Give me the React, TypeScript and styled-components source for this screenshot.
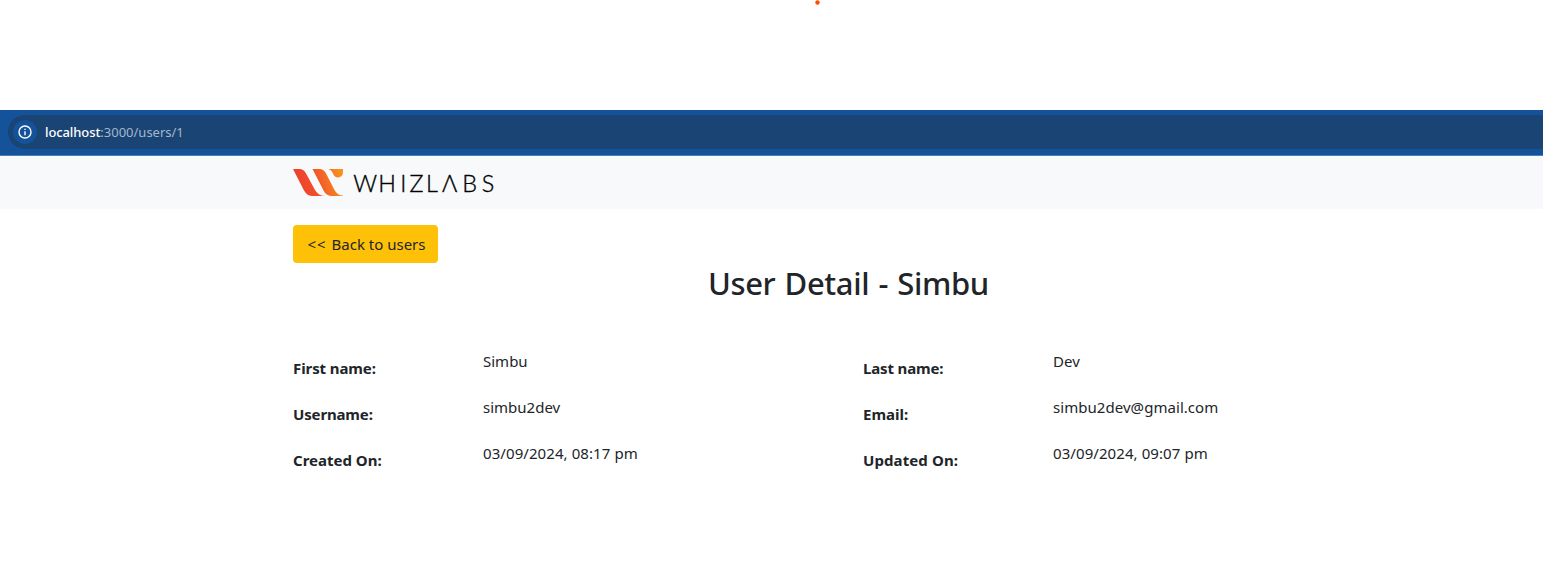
import React from "react";
import styled, { createGlobalStyle } from "styled-components";

const GlobalStyle = createGlobalStyle`
  * { box-sizing: border-box; }
  body {
    margin: 0;
    background: #fff;
    color: #212529;
    font-family: "Noto Sans", "Open Sans", sans-serif;
    font-size: 15px;
    line-height: 24px;
  }
`;

const Top = styled.div`
  height: 110px;
  padding-left: 815px;
`;

const Dot = styled.svg`
  display: block;
`;

const BrowserBar = styled.div`
  height: 46px;
  padding: 5px 0 6px 8px;
  background: #14539a;
  border-bottom: 1px solid #4a7fb8;
`;

const AddressField = styled.div`
  display: flex;
  align-items: center;
  height: 34px;
  padding-left: 5px;
  border-radius: 17px 0 0 17px;
  background: #194473;
`;

const InfoBadge = styled.span`
  display: flex;
  align-items: center;
  justify-content: center;
  width: 24px;
  height: 24px;
  border-radius: 50%;
  background: #14539a;
`;

const Address = styled.span`
  margin-left: 8px;
  color: #a3b8cf;
  font-size: 13px;
  line-height: 20px;
`;

const Host = styled.span`
  color: #fff;
  font-weight: 500;
  letter-spacing: -0.1px;
`;

const Header = styled.header`
  height: 53px;
  padding: 10px 0 0 293px;
  background: #f8f9fb;
`;

const Logo = styled.svg`
  display: block;
`;

const Wordmark = styled.text`
  font-family: Lato, sans-serif;
  font-size: 23.4px;
  font-weight: 300;
  fill: #000;
  stroke: #000;
  stroke-width: 0.35px;
`;

const Main = styled.main`
  width: 1140px;
  margin-left: 293px;
  padding-top: 16px;
`;

const BackButton = styled.button`
  display: block;
  width: 145px;
  height: 38px;
  padding: 0 0 0 2px;
  border: 0;
  border-radius: 4px;
  background: #ffc107;
  color: #212529;
  font: inherit;
  white-space: nowrap;
`;

const Arrows = styled.span`
  margin-right: 1px;
  letter-spacing: 1px;
`;

const Title = styled.h2`
  height: 38px;
  margin: 1px 0 0 415px;
  font-size: 31px;
  font-weight: 500;
  line-height: 38px;
  letter-spacing: -0.38px;
  word-spacing: 1.6px;
`;

const Details = styled.dl`
  display: grid;
  grid-template-columns: repeat(2, 190px 380px);
  grid-auto-rows: 46px;
  margin: 46px 0 0;
`;

const Label = styled.dt<{ $spacing: number }>`
  padding-top: 8px;
  font-weight: 700;
  letter-spacing: ${(p) => p.$spacing}px;
`;

const Value = styled.dd<{ $spacing: number }>`
  margin: 0;
  padding-top: 1px;
  letter-spacing: ${(p) => p.$spacing}px;
`;

const fields = [
  { label: "First name:", value: "Simbu", ls: -0.1, vs: 0 },
  { label: "Last name:", value: "Dev", ls: -0.15, vs: 0.1 },
  { label: "Username:", value: "simbu2dev", ls: -0.15, vs: 0 },
  { label: "Email:", value: "simbu2dev@gmail.com", ls: 0, vs: 0.05 },
  { label: "Created On:", value: "03/09/2024, 08:17 pm", ls: 0, vs: 0.08 },
  { label: "Updated On:", value: "03/09/2024, 09:07 pm", ls: 0.1, vs: 0.08 },
];

export default function App() {
  return (
    <>
      <GlobalStyle />
      <Top>
        <Dot width="5" height="5" viewBox="0 0 5 5">
          <circle cx="2.5" cy="2.5" r="2.2" fill="#ff4d00" />
        </Dot>
      </Top>
      <BrowserBar>
        <AddressField>
          <InfoBadge>
            <svg width="14" height="14" viewBox="0 0 14 14" fill="none" stroke="#fff">
              <circle cx="7" cy="7" r="6" strokeWidth="1.4" />
              <path d="M7 6.2v4M7 3.8v1.3" strokeWidth="1.4" />
            </svg>
          </InfoBadge>
          <Address>
            <Host>localhost</Host>:3000/users/1
          </Address>
        </AddressField>
      </BrowserBar>
      <Header>
        <Logo width="206" height="34" viewBox="0 -3 206 34" aria-label="Whizlabs">
          <defs>
            <linearGradient id="mark" gradientUnits="userSpaceOnUse" x1="0" y1="15" x2="50" y2="4">
              <stop offset="0" stopColor="#ee3d2f" />
              <stop offset="0.4" stopColor="#f04e2b" />
              <stop offset="1" stopColor="#f9951d" />
            </linearGradient>
          </defs>
          <g fill="url(#mark)">
            <path d="M0 0H6.500Q10.500 0 12.800 4L22 21Q25.200 26.500 31.500 27H20Q14 27 11 21.500Z" />
            <path d="M19.500 0H26.500Q30.500 0 32.800 4L41.500 21Q44.500 26.500 50 26.500V27H39.500Q33 27 30.300 21Z" />
            <path d="M35.500 0H50V3.800A5 5 0 0 1 41 6.500L39.500 3.500Q38 0.600 35.500 0Z" />
          </g>
          <Wordmark x="60.3 85.300 107.200 116.500 133 149 169.300 188.800" y="23">WHIZLΛBS</Wordmark>
        </Logo>
      </Header>
      <Main>
        <BackButton>
          <Arrows>&lt;&lt;</Arrows> Back to users
        </BackButton>
        <Title>User Detail - Simbu</Title>
        <Details>
          {fields.map((f) => (
            <React.Fragment key={f.label}>
              <Label $spacing={f.ls}>{f.label}</Label>
              <Value $spacing={f.vs}>{f.value}</Value>
            </React.Fragment>
          ))}
        </Details>
      </Main>
    </>
  );
}
